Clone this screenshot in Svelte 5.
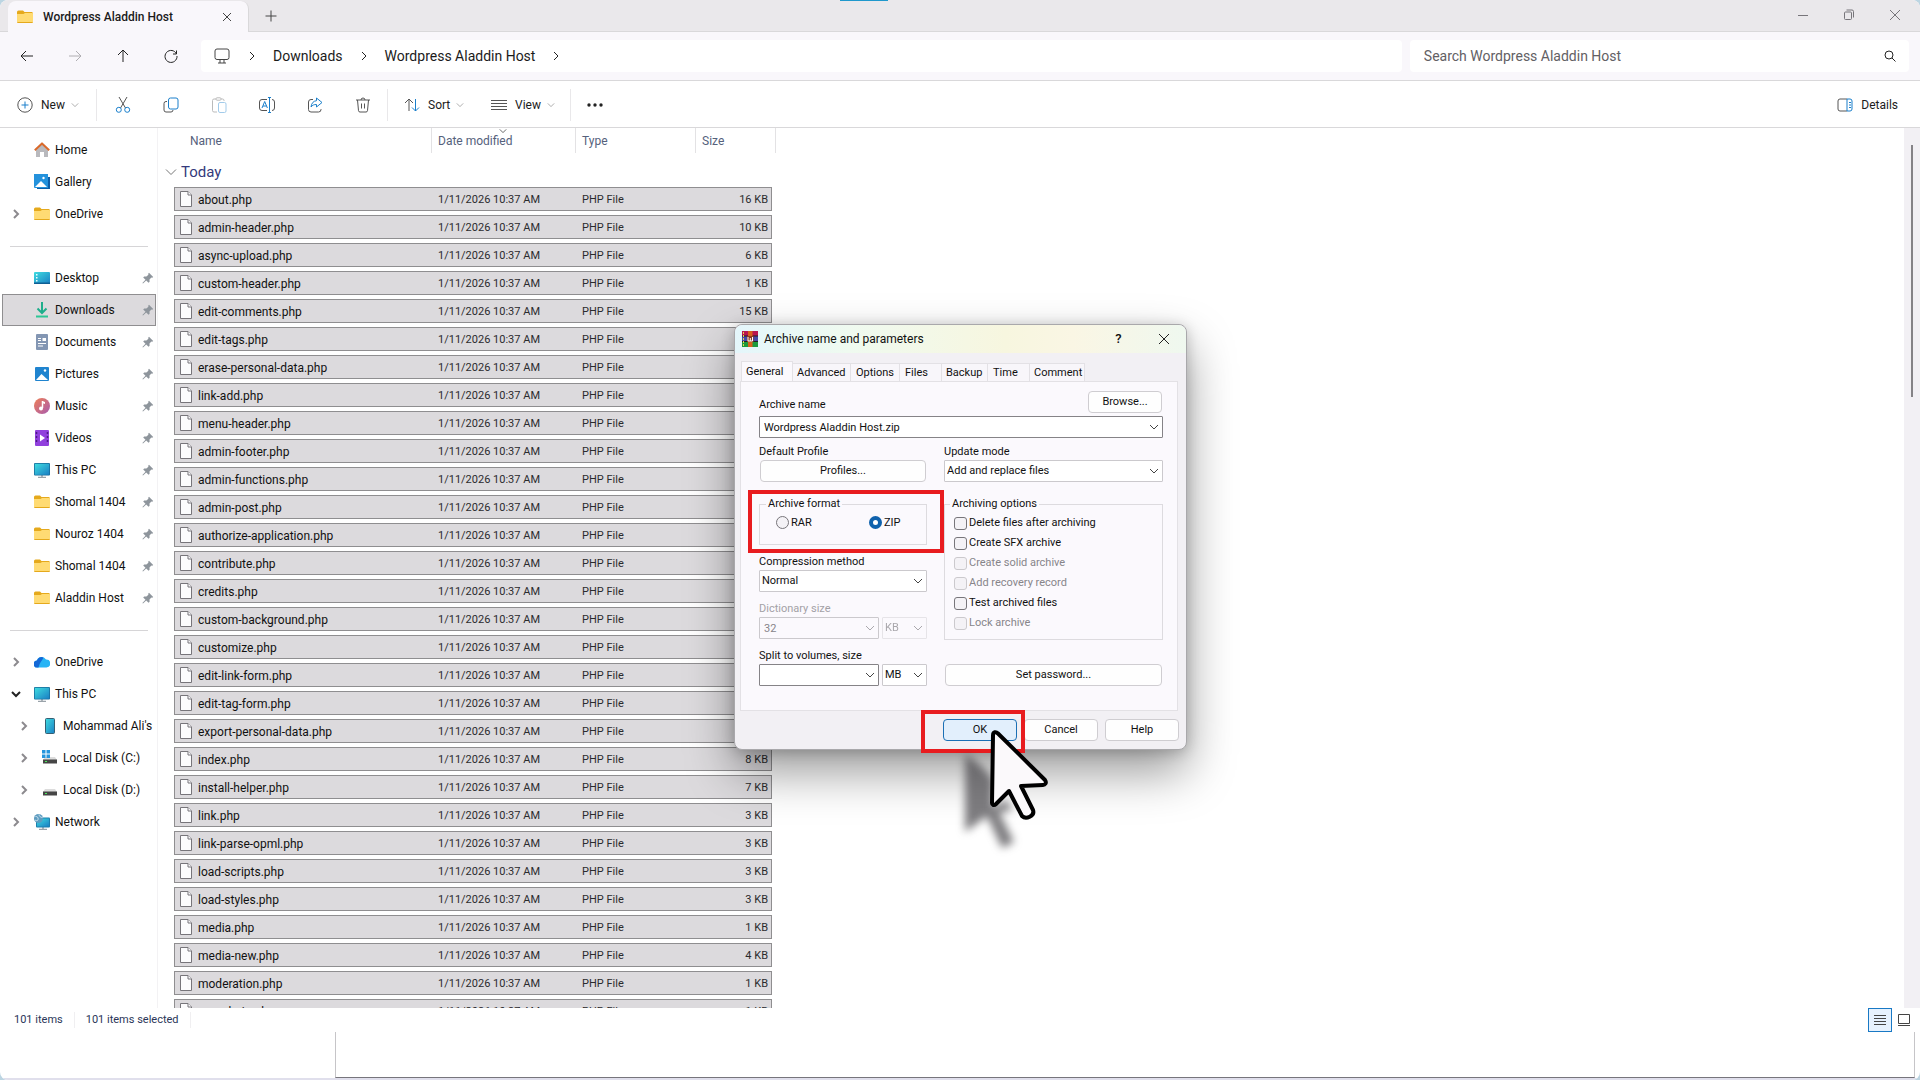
<script>
    const navTop = [
        { label: 'Home', icon: 'home' },
        { label: 'Gallery', icon: 'gallery' },
        { label: 'OneDrive', icon: 'folder', arrow: 'right' }
    ];
    const pinned = [
        { label: 'Desktop', icon: 'desktop' },
        { label: 'Downloads', icon: 'downloads', active: true },
        { label: 'Documents', icon: 'documents' },
        { label: 'Pictures', icon: 'pictures' },
        { label: 'Music', icon: 'music' },
        { label: 'Videos', icon: 'videos' },
        { label: 'This PC', icon: 'pc' },
        { label: 'Shomal 1404', icon: 'folder' },
        { label: 'Nouroz 1404', icon: 'folder' },
        { label: 'Shomal 1404', icon: 'folder' },
        { label: 'Aladdin Host', icon: 'folder' }
    ].map((item) => ({ ...item, pin: true }));
    const drives = [
        { label: 'OneDrive', icon: 'cloud', arrow: 'right' },
        { label: 'This PC', icon: 'pc', arrow: 'down' },
        { label: "Mohammad Ali's", icon: 'phone', arrow: 'right', child: true },
        { label: 'Local Disk (C:)', icon: 'diskC', arrow: 'right', child: true },
        { label: 'Local Disk (D:)', icon: 'diskD', arrow: 'right', child: true },
        { label: 'Network', icon: 'network', arrow: 'right' }
    ];
    const navGroups = [navTop, pinned, drives];

    const files = [
        ['about.php', 16],
        ['admin-header.php', 10],
        ['async-upload.php', 6],
        ['custom-header.php', 1],
        ['edit-comments.php', 15],
        ['edit-tags.php', 22],
        ['erase-personal-data.php', 8],
        ['link-add.php', 1],
        ['menu-header.php', 10],
        ['admin-footer.php', 3],
        ['admin-functions.php', 1],
        ['admin-post.php', 2],
        ['authorize-application.php', 10],
        ['contribute.php', 6],
        ['credits.php', 5],
        ['custom-background.php', 1],
        ['customize.php', 11],
        ['edit-link-form.php', 7],
        ['edit-tag-form.php', 11],
        ['export-personal-data.php', 8],
        ['index.php', 8],
        ['install-helper.php', 7],
        ['link.php', 3],
        ['link-parse-opml.php', 3],
        ['load-scripts.php', 3],
        ['load-styles.php', 3],
        ['media.php', 1],
        ['media-new.php', 4],
        ['moderation.php', 1],
        ['ms-admin.php', 1]
    ];

    const tabs = ['General', 'Advanced', 'Options', 'Files', 'Backup', 'Time', 'Comment'];
    let currentTab = $state('General');

    let archiveName = $state('Wordpress Aladdin Host.zip');
    let format = $state('ZIP');
    const options = $state([
        { label: 'Delete files after archiving', checked: false },
        { label: 'Create SFX archive', checked: false },
        { label: 'Create solid archive', checked: false, disabled: true },
        { label: 'Add recovery record', checked: false, disabled: true },
        { label: 'Test archived files', checked: false },
        { label: 'Lock archive', checked: false, disabled: true }
    ]);
</script>

{#snippet chevron(dir)}
    <svg class="chev" width="10" height="10" viewBox="0 0 10 10">
        {#if dir === 'right'}
            <path d="M3 1l4 4-4 4" />
        {:else}
            <path d="M1 3l4 4 4-4" />
        {/if}
    </svg>
{/snippet}

{#snippet navIcon(name)}
    <svg class="icon" width="16" height="16" viewBox="0 0 16 16">
        {#if name === 'home'}
            <path d="M2 8l6-6 6 6v7h-4v-5H6v5H2z" fill="#b9b9bd" />
            <path d="M.8 8.2L8 1.4l7.2 6.8" fill="none" stroke="#d9692a" stroke-width="2" stroke-linejoin="round" />
        {:else if name === 'gallery'}
            <path d="M3 3h13v12H3z" fill="#0d5ea8" />
            <path d="M0 0h14v14H1a1 1 0 0 1-1-1z" fill="#2492dc" />
            <path d="M1 13l6-6 6 6z" fill="#fff" />
            <circle cx="9.500" cy="4" r="1.200" fill="#fff" />
        {:else if name === 'folder'}
            <path d="M0 3a1.500 1.500 0 0 1 1.500-1.500H6L7.500 3H15l1 1V13a1 1 0 0 1-1 1H1a1 1 0 0 1-1-1z" fill="#e5a91c" />
            <path d="M0 5h6.500L8 4h7.500l.5.500v8.500H0z" fill="#ffdb73" />
        {:else if name === 'desktop'}
            <rect y="2" width="16" height="12" rx="1" fill="url(#teal)" />
            <path d="M2 4h1.500v1.500H2zM2 7h1.500v1.500H2zM2 10h1.500v1.500H2z" fill="#e8ffff" />
            <path d="M0 12.500h16V14H0z" fill="#0f5f94" />
        {:else if name === 'downloads'}
            <path d="M8 0v10M3.500 6.500L8 11l4.500-4.500" fill="none" stroke="#1fae8c" stroke-width="2" />
            <path d="M2 14.500h12" stroke="#2cc795" stroke-width="2" />
        {:else if name === 'documents'}
            <rect x="2" width="12" height="16" rx="1" fill="#8396b3" />
            <path d="M4 4.500h3M4 6.500h3M4 9.500h8M4 12h5" stroke="#fff" />
            <path d="M8.500 4h3.500v3H8.500z" fill="#fff" />
        {:else if name === 'pictures'}
            <rect x="1" y="1" width="14" height="14" rx="1" fill="#2084cf" />
            <path d="M2 14l5.500-6L14 14z" fill="#fff" />
            <circle cx="11" cy="4.500" r="1.200" fill="#fff" />
        {:else if name === 'music'}
            <circle cx="8" cy="8" r="8" fill="url(#rose)" />
            <path d="M8.500 3v7" stroke="#fff" stroke-width="1.500" />
            <path d="M8 3l3 1v2L8 5z" fill="#fff" />
            <circle cx="7" cy="10.500" r="2" fill="#fff" />
        {:else if name === 'videos'}
            <rect x="1" width="14" height="16" rx="1" fill="#9140dd" />
            <path d="M2.500 2v12M13.500 2v12" stroke="#4d1b86" stroke-width="1.500" stroke-dasharray="2 2" />
            <path d="M6 4.500L11 8l-5 3.500z" fill="#fff" />
        {:else if name === 'pc'}
            <path d="M4 15.500h8M8 13v3" stroke="#9aa3aa" stroke-width="1.500" />
            <rect y="1" width="16" height="12.500" rx="1" fill="#176e9c" />
            <rect x=".8" y="1.800" width="14.400" height="11" fill="url(#teal)" />
        {:else if name === 'cloud'}
            <path d="M3.500 13.500a3.500 3.500 0 0 1-.6-7A5 5 0 0 1 12 5.500a4 4 0 0 1 .5 8z" fill="#27b4f5" />
            <path d="M3.500 13.500a3.500 3.500 0 0 1-.6-7A5 5 0 0 1 9.500 3.500C8 7 6 8 4.500 13.500z" fill="#1468d6" />
        {:else if name === 'phone'}
            <rect x="3.500" y=".5" width="9" height="15" rx="1" fill="url(#teal)" stroke="#355f73" />
        {:else if name === 'diskC' || name === 'diskD'}
            <path d="M3 7h10l2 3H1z" fill="#dcdcdc" />
            <path d="M1 9.500h14v4H1z" fill="#454545" />
            <path d="M3 11.500h2" stroke="#4bea5c" />
            {#if name === 'diskC'}
                <path d="M0 0h3.500v3.500H0zM4.500 0H8v3.500H4.500zM0 4.500h3.500V8H0zM4.500 4.500H8V8H4.500z" fill="#2695dd" />
            {/if}
        {:else if name === 'network'}
            <path d="M5 15.500h8M9 13v3" stroke="#9aa3aa" stroke-width="1.500" />
            <rect x="2" y="3.500" width="14" height="10" rx="1" fill="#1b7fae" />
            <rect x="3" y="4.500" width="12" height="8" fill="url(#teal)" />
            <circle cx="4.500" cy="4.500" r="4.500" fill="#5e9cc0" />
            <path d="M1.500 2.500c2 0 3 1 2.500 3S2 6.500 1 6M5 .500c0 2 2 3 3.500 3" fill="none" stroke="#cde3ef" />
        {/if}
    </svg>
{/snippet}

{#snippet navList(items)}
    <ul>
        {#each items as item}
            <li>
                <button class="nav-item" class:active={item.active} class:child={item.child}>
                    <span class="arrow" class:open={item.arrow === 'down'}>
                        {#if item.arrow}{@render chevron(item.arrow)}{/if}
                    </span>
                    {@render navIcon(item.icon)}
                    <span class="nav-label">{item.label}</span>
                    {#if item.pin}
                        <svg class="pin" width="12" height="12" viewBox="0 0 12 12">
                            <path d="M7 .800L11.200 5l-1 .8-.8-.200-1.900 2 .1 2.200-1 1L4.200 8.500 1 11.500l-.6-.6L3.500 7.800 1.200 5.500l1-1 2.200.1 2-1.900-.2-.900z" />
                        </svg>
                    {/if}
                </button>
            </li>
        {/each}
    </ul>
{/snippet}

<svg class="defs" width="0" height="0" aria-hidden="true">
    <linearGradient id="teal" x2="1" y2="1">
        <stop offset="0" stop-color="#3fdce0" />
        <stop offset="1" stop-color="#1a7fc4" />
    </linearGradient>
    <linearGradient id="rose" x2="1" y2="1">
        <stop offset="0" stop-color="#ef7f55" />
        <stop offset="1" stop-color="#a85bb0" />
    </linearGradient>
</svg>

<div class="window">
    <header class="titlebar">
        <div class="tab">
            {@render navIcon('folder')}
            <span class="tab-title">Wordpress Aladdin Host</span>
            <button aria-label="Close tab">
                <svg width="10" height="10" viewBox="0 0 10 10"><path d="M1 1l8 8M9 1L1 9" /></svg>
            </button>
        </div>
        <button class="new-tab" aria-label="New tab">
            <svg width="12" height="12" viewBox="0 0 12 12"><path d="M6 .5v11M.5 6h11" /></svg>
        </button>
        <div class="win-buttons">
            <button aria-label="Minimize">
                <svg width="12" height="12" viewBox="0 0 12 12"><path d="M1 6.500h10" /></svg>
            </button>
            <button aria-label="Restore">
                <svg width="12" height="12" viewBox="0 0 12 12">
                    <rect x="1.500" y="3" width="7" height="7.500" rx="1" />
                    <path d="M3.500 1h5.500a1.500 1.500 0 0 1 1.500 1.500v6" />
                </svg>
            </button>
            <button aria-label="Close">
                <svg width="12" height="12" viewBox="0 0 12 12"><path d="M1 1l10 10M11 1L1 11" /></svg>
            </button>
        </div>
        <i class="notch"></i>
    </header>

    <div class="address">
        <button class="nav-btn" aria-label="Back">
            <svg width="14" height="14" viewBox="0 0 14 14"><path d="M13 7H1M6 2L1 7l5 5" /></svg>
        </button>
        <button class="nav-btn off" aria-label="Forward">
            <svg width="14" height="14" viewBox="0 0 14 14"><path d="M1 7h12M8 2l5 5-5 5" /></svg>
        </button>
        <button class="nav-btn" aria-label="Up">
            <svg width="14" height="14" viewBox="0 0 14 14"><path d="M7 13V1M2 6l5-5 5 5" /></svg>
        </button>
        <button class="nav-btn" aria-label="Refresh">
            <svg width="14" height="14" viewBox="0 0 14 14"><path d="M12.500 5A6 6 0 1 0 13 7M12.500 1.500V5H9" /></svg>
        </button>
        <nav class="crumbs">
            <svg width="18" height="16" viewBox="0 0 18 16">
                <rect x="2" y="1" width="14" height="10.500" rx="2" />
                <path d="M7 11.500V15M11 11.500V15M5 15h8" />
            </svg>
            <span class="sep">{@render chevron('right')}</span>
            <a href="#downloads">Downloads</a>
            <span class="sep">{@render chevron('right')}</span>
            <a href="#host">Wordpress Aladdin Host</a>
            <span class="sep">{@render chevron('right')}</span>
        </nav>
        <label class="search">
            <input type="text" aria-label="Search" placeholder="Search Wordpress Aladdin Host" />
            <svg width="12" height="12" viewBox="0 0 12 12"><circle cx="5" cy="5" r="4" /><path d="M8 8l3.500 3.500" /></svg>
        </label>
    </div>

    <div class="toolbar">
        <button class="tool new">
            <svg width="16" height="16" viewBox="0 0 16 16">
                <circle cx="8" cy="8" r="7.200" />
                <path class="blue" d="M8 4.500v7M4.500 8h7" />
            </svg>
            New {@render chevron('down')}
        </button>
        <button class="tool square" aria-label="Cut">
            <svg width="16" height="16" viewBox="0 0 16 16">
                <path d="M4 0l6.500 11M12 0L5.500 11" />
                <circle class="blue" cx="3.800" cy="12.800" r="2.500" />
                <circle class="blue" cx="12.200" cy="12.800" r="2.500" />
            </svg>
        </button>
        <button class="tool square" aria-label="Copy">
            <svg width="16" height="16" viewBox="0 0 16 16">
                <path d="M4 4.500H3a2 2 0 0 0-2 2V13a2 2 0 0 0 2 2h5a2 2 0 0 0 2-2" />
                <rect class="blue" x="5.500" y="1" width="9.500" height="11" rx="2" />
            </svg>
        </button>
        <button class="tool square faded" aria-label="Paste">
            <svg width="16" height="16" viewBox="0 0 16 16">
                <path d="M5 2H3a1.500 1.500 0 0 0-1.500 1.500v10A1.500 1.500 0 0 0 3 15h3M10 2h1.500A1.500 1.500 0 0 1 13 3.500V4" />
                <rect x="5" y=".8" width="5" height="2.400" rx="1" />
                <rect class="blue" x="7.500" y="5.500" width="7.500" height="10" rx="1.500" />
            </svg>
        </button>
        <button class="tool square" aria-label="Rename">
            <svg width="18" height="16" viewBox="0 0 18 16">
                <path d="M9 2.500H4a2.500 2.500 0 0 0-2.500 2.500v6A2.500 2.500 0 0 0 4 13.500h5M14 2.500a2.500 2.500 0 0 1 2.500 2.500v6a2.500 2.500 0 0 1-2.500 2.500" />
                <path class="blue" d="M4 11l2.700-6.500L9.400 11M5 9h3.500M10 .5h3M11.500 .5v15M10 15.500h3" />
            </svg>
        </button>
        <button class="tool square" aria-label="Share">
            <svg width="16" height="16" viewBox="0 0 16 16">
                <path d="M6 2.500H4A2.500 2.500 0 0 0 1.500 5v7.500A2.500 2.500 0 0 0 4 15h7.500a2.500 2.500 0 0 0 2.500-2.500V12" />
                <path class="blue" d="M9.500 1l5.500 4.500L9.500 10V7.500c-2.500 0-4 .5-5.500 2.500.5-4 2.500-6 5.500-6.300z" />
            </svg>
        </button>
        <button class="tool square" aria-label="Delete">
            <svg width="16" height="16" viewBox="0 0 16 16">
                <path d="M1 3h14M6 3a2 2 0 0 1 4 0M2.500 3l1 10.700A1.500 1.500 0 0 0 5 15h6a1.500 1.500 0 0 0 1.500-1.300l1-10.700M6.500 6.500v5M9.500 6.500v5" />
            </svg>
        </button>
        <button class="tool sort">
            <svg width="16" height="16" viewBox="0 0 16 16">
                <path d="M5 14V2M1 6l4-4 4 4" />
                <path class="blue" d="M11.500 2v12M8 10.500l3.500 3.500 3.500-3.500" />
            </svg>
            Sort {@render chevron('down')}
        </button>
        <button class="tool view">
            <svg width="16" height="16" viewBox="0 0 16 16"><path d="M0 3.500h16M0 6.500h16M0 9.500h16M0 12.500h16" /></svg>
            View {@render chevron('down')}
        </button>
        <button class="tool more" aria-label="See more">
            <svg width="18" height="4" viewBox="0 0 18 4">
                <circle cx="3" cy="2" r="1.700" /><circle cx="9" cy="2" r="1.700" /><circle cx="15" cy="2" r="1.700" />
            </svg>
        </button>
        <button class="tool details">
            <svg width="16" height="16" viewBox="0 0 16 16">
                <path d="M10 2H3a2 2 0 0 0-2 2v8a2 2 0 0 0 2 2h7" />
                <path class="blue" d="M10 2h3a2 2 0 0 1 2 2v8a2 2 0 0 1-2 2h-3zM12 5.500h2M12 8h2M12 10.500h2" />
            </svg>
            Details
        </button>
    </div>

    <main>
        <aside>
            {#each navGroups as group, i}
                {#if i > 0}<hr />{/if}
                {@render navList(group)}
            {/each}
        </aside>

        <section class="list">
            <table>
                <thead>
                    <tr>
                        <th>Name</th>
                        <th class="sorted">Date modified {@render chevron('down')}</th>
                        <th>Type</th>
                        <th>Size</th>
                    </tr>
                </thead>
                <tbody>
                    <tr class="group">
                        <th colspan="4">
                            <svg width="12" height="12" viewBox="0 0 12 12"><path d="M1 3.500l5 5 5-5" /></svg>
                            Today
                        </th>
                    </tr>
                    {#each files as [name, size]}
                        <tr class="file">
                            <td class="name">
                                <svg width="12" height="16" viewBox="0 0 12 16">
                                    <path d="M.5.5H8L11.500 4v11.500H.5z" />
                                    <path d="M8 .5V4h3.500" />
                                </svg>
                                <span>{name}</span>
                            </td>
                            <td>1/11/2026 10:37 AM</td>
                            <td>PHP File</td>
                            <td class="size">{size} KB</td>
                        </tr>
                    {/each}
                </tbody>
            </table>
        </section>
        <div class="scroll"><i></i></div>
    </main>

    <footer>
        <span>101 items</span>
        <span>101 items selected</span>
        <div class="modes">
            <button class="on" aria-label="Details view">
                <svg width="12" height="12" viewBox="0 0 12 12"><path d="M0 1.500h12M0 4.500h12M0 7.500h12M0 10.500h12" /></svg>
            </button>
            <button aria-label="Large icons view">
                <svg width="12" height="12" viewBox="0 0 12 12"><path d="M.5.500h11v9H.5zM0 11.500h12" /></svg>
            </button>
        </div>
    </footer>
    <div class="under"><div></div></div>

    <div class="dialog" role="dialog" aria-label="Archive name and parameters">
        <div class="dialog-title">
            <svg width="16" height="16" viewBox="0 0 16 16">
                <path d="M0 0h16v5H0z" fill="#b91550" stroke="none" />
                <path d="M0 5h16v5.500H0z" fill="#4648a8" stroke="none" />
                <path d="M0 10.500h16V16H0z" fill="#1c9a3c" stroke="none" />
                <path d="M0 5h16M0 10.500h16" stroke="#222" />
                <path d="M1.500 1v14" stroke="#e9d34c" stroke-dasharray="2 1" />
                <path d="M6 0h4.500v16H6z" fill="#d9601d" stroke="none" />
                <path d="M5 5h6.500v6H5z" fill="#8f3b22" stroke="none" />
                <path d="M6 6v4h4.500V6M8.300 7v3" fill="none" stroke="#fff" />
            </svg>
            <h2>Archive name and parameters</h2>
            <button aria-label="Help">?</button>
            <button aria-label="Close dialog">
                <svg width="12" height="12" viewBox="0 0 12 12"><path d="M1 1l10 10M11 1L1 11" /></svg>
            </button>
        </div>

        <div class="tabs" role="tablist">
            {#each tabs as tab}
                <button role="tab" aria-selected={tab === currentTab} class:current={tab === currentTab} onclick={() => (currentTab = tab)}>{tab}</button>
            {/each}
        </div>

        <div class="panel">
            <div class="name-row">
                <label for="archive-name">Archive name</label>
                <button class="push">Browse...</button>
            </div>
            <div class="combo dark">
                <input id="archive-name" type="text" bind:value={archiveName} />
                {@render chevron('down')}
            </div>

            <div class="columns">
                <div class="col">
                    <label for="profiles">Default Profile</label>
                    <button id="profiles" class="push">Profiles...</button>

                    <fieldset class="format">
                        <legend>Archive format</legend>
                        <label><input type="radio" bind:group={format} value="RAR" />RAR</label>
                        <label><input type="radio" bind:group={format} value="ZIP" />ZIP</label>
                    </fieldset>

                    <label for="method">Compression method</label>
                    <div class="combo">
                        <select id="method"><option>Normal</option></select>
                        {@render chevron('down')}
                    </div>

                    <label class="field off" for="dict">Dictionary size</label>
                    <div class="pair">
                        <div class="combo off">
                            <input id="dict" type="text" value="32" disabled />
                            {@render chevron('down')}
                        </div>
                        <div class="combo off faint">
                            <select aria-label="Dictionary unit" disabled><option>KB</option></select>
                            {@render chevron('down')}
                        </div>
                    </div>

                    <label class="field" for="split">Split to volumes, size</label>
                    <div class="pair">
                        <div class="combo dark">
                            <input id="split" type="text" />
                            {@render chevron('down')}
                        </div>
                        <div class="combo">
                            <select aria-label="Volume unit"><option>MB</option></select>
                            {@render chevron('down')}
                        </div>
                    </div>
                </div>

                <div class="col">
                    <label for="update">Update mode</label>
                    <div class="combo">
                        <select id="update"><option>Add and replace files</option></select>
                        {@render chevron('down')}
                    </div>

                    <fieldset class="options">
                        <legend>Archiving options</legend>
                        {#each options as option}
                            <label class:off={option.disabled}>
                                <input type="checkbox" bind:checked={option.checked} disabled={option.disabled} />{option.label}
                            </label>
                        {/each}
                    </fieldset>

                    <button class="push password">Set password...</button>
                </div>
            </div>
        </div>

        <div class="actions">
            <button class="push default">OK</button>
            <button class="push">Cancel</button>
            <button class="push">Help</button>
        </div>

        <i class="mark mark-format"></i>
        <i class="mark mark-ok"></i>
        <svg class="cursor" width="100" height="130" viewBox="0 0 100 130">
            <path class="shade" d="M12 26c10 6 22 16 28 26v28l12-8 8 10-14 2 15 30-12 6-15-32-22 16z" />
            <path class="pointer" d="M40 7.500c0-4 3-4 5-2L92 52c2 3 0 5-2 5l-22 1 12 24c2 6-7 10-11 6L56 63 43 76c-2 2-4 1-4-1z" />
        </svg>
    </div>
</div>

<style>
    :global(body) {
        margin: 0;
        background: #bcd5e2;
        font: 12px/16px Roboto, "Open Sans", sans-serif;
        color: #1b1b1b;
    }
    button, input, select {
        font: inherit;
        color: inherit;
        margin: 0;
        padding: 0;
        border: 0;
        background: none;
        outline: none;
    }
    button {
        display: flex;
        align-items: center;
        justify-content: center;
    }
    svg {
        flex: none;
        fill: none;
        stroke: #444;
    }
    .icon {
        stroke: none;
    }
    .defs {
        position: absolute;
    }
    .window {
        position: relative;
        display: flex;
        flex-direction: column;
        height: 100vh;
        overflow: hidden;
        background: #fff;
        border-radius: 8px;
    }

    /* title bar */
    .titlebar {
        display: flex;
        align-items: flex-end;
        flex: none;
        height: 31px;
        padding-left: 8px;
        background: #eae8eb;
        border-bottom: 1px solid #d9d8da;
    }
    .tab {
        display: flex;
        align-items: center;
        width: 222px;
        height: 31px;
        margin-bottom: -1px;
        padding: 0 9px;
        background: #f9f7fb;
        border-right: 1px solid #d9d8da;
        border-radius: 8px 8px 0 0;
    }
    .tab-title {
        flex: 1;
        padding-left: 10px;
        font-weight: 500;
    }
    .tab button {
        width: 24px;
        height: 24px;
    }
    .new-tab {
        width: 44px;
        height: 30px;
    }
    .win-buttons {
        display: flex;
        margin-left: auto;
        align-self: flex-start;
        padding-right: 2px;
    }
    .win-buttons button {
        width: 46px;
        height: 29px;
    }
    .win-buttons svg {
        stroke: #77757a;
    }
    .notch {
        position: absolute;
        top: 0;
        left: 840px;
        width: 48px;
        height: 1px;
        background: #1f98cc;
    }

    /* address row */
    .address {
        display: flex;
        align-items: center;
        flex: none;
        height: 48px;
        padding: 0 11px 0 3px;
        background: #f9f7fb;
        border-bottom: 1px solid #d9d8da;
    }
    .nav-btn {
        width: 48px;
        height: 32px;
    }
    .nav-btn svg {
        stroke: #222;
    }
    .nav-btn.off svg {
        stroke: #b0aeb2;
    }
    .crumbs, .search {
        display: flex;
        align-items: center;
        height: 32px;
        background: #fff;
        border-radius: 4px;
        font-size: 14px;
    }
    .crumbs {
        flex: 1;
        margin-left: 6px;
        padding-left: 12px;
    }
    .crumbs a {
        color: #1b1b1b;
        text-decoration: none;
    }
    .sep {
        display: flex;
        justify-content: center;
        width: 42px;
    }
    .sep svg {
        stroke: #222;
    }
    .search {
        width: 26vw;
        margin-left: 8px;
        padding: 0 13px 0 14px;
        box-sizing: border-box;
    }
    .search input {
        flex: 1;
    }
    .search input::placeholder {
        color: #626064;
        opacity: 1;
    }
    .search svg {
        stroke: #222;
    }

    /* command bar */
    .toolbar {
        display: flex;
        align-items: center;
        flex: none;
        height: 45px;
        padding: 1px 22px 0 17px;
        border-bottom: 1px solid #d9d8da;
    }
    .tool {
        height: 32px;
        gap: 8px;
    }
    .tool svg {
        stroke: #555;
    }
    .tool .blue {
        stroke: #1a7fcb;
    }
    .tool .chev {
        width: 8px;
        margin-left: -2px;
        stroke: #999;
    }
    .tool.new {
        justify-content: flex-start;
        width: 80px;
        border-right: 1px solid #e9e8ea;
        margin-right: 2px;
    }
    .square {
        width: 48px;
    }
    .faded svg {
        opacity: 0.4;
    }
    .tool.sort {
        justify-content: flex-start;
        width: 104px;
        padding-left: 16px;
        border-left: 1px solid #e9e8ea;
    }
    .tool.view {
        justify-content: flex-start;
        width: 80px;
        border-right: 1px solid #e9e8ea;
    }
    .tool.more {
        width: 48px;
    }
    .tool.more svg {
        fill: #222;
        stroke: none;
    }
    .tool.details {
        margin-left: auto;
    }

    /* navigation pane */
    main {
        display: flex;
        flex: 1;
        min-height: 0;
    }
    aside {
        flex: none;
        width: 158px;
        padding-top: 6px;
        box-sizing: border-box;
        border-right: 1px solid #f3f2f4;
        margin-right: 1px;
        overflow: hidden;
    }
    ul {
        margin: 0;
        padding: 0;
        list-style: none;
    }
    hr {
        margin: 16px 9px 15px 10px;
        border: 0;
        border-top: 1px solid #d6d5d7;
    }
    .nav-item {
        justify-content: flex-start;
        width: 154px;
        height: 32px;
        margin-left: 2px;
        padding: 0 2px 0 9px;
        box-sizing: border-box;
        color: #111;
        white-space: nowrap;
    }
    .nav-item.active {
        padding: 0 1px 0 8px;
        background: #dcdadd;
        border: 1px solid #8f8e90;
    }
    .nav-item.child {
        padding-left: 17px;
        padding-right: 0;
    }
    .arrow {
        display: flex;
        width: 23px;
    }
    .arrow svg {
        stroke: #8c8a8e;
        stroke-width: 2;
    }
    .arrow.open svg {
        stroke: #222;
    }
    .nav-label {
        flex: 1;
        padding-left: 5px;
        text-align: left;
    }
    .pin {
        fill: #8e959c;
        stroke: none;
    }

    /* file list */
    .list {
        flex: 1;
        padding-left: 15px;
        overflow: hidden;
    }
    table, thead, tbody {
        display: block;
    }
    tr {
        display: grid;
        grid-template-columns: 257px 144px 120px 75px;
    }
    th {
        font-weight: 400;
        text-align: left;
    }
    thead tr {
        grid-template-columns: 258px 144px 120px 80px;
        height: 25px;
        color: #55617c;
    }
    thead th {
        position: relative;
        padding: 5px 6px 4px;
        border-right: 1px solid #e3e2e4;
    }
    thead th:first-child {
        padding-left: 16px;
    }
    .sorted .chev {
        position: absolute;
        top: -2px;
        left: 67px;
        width: 8px;
    }
    .group {
        height: 34px;
    }
    .group th {
        grid-column: 1 / -1;
        display: flex;
        align-items: center;
        gap: 4px;
        margin-left: -9px;
        padding: 4px 0 0;
        font-size: 15px;
        color: #343a7c;
    }
    .group svg {
        stroke: #777;
    }
    .file {
        width: 596px;
        height: 22px;
        margin-bottom: 4px;
        border: 1px solid #8f8e90;
        background: #dcdadd;
    }
    .file td {
        padding: 4px 6px 2px;
        font-size: 11px;
        color: #2b2b2e;
    }
    .file .name {
        display: flex;
        align-items: flex-start;
        gap: 6px;
        padding: 3px 5px 0;
        font-size: 12px;
        color: #111;
    }
    .name span {
        padding-top: 1px;
    }
    .name svg {
        fill: #fcfcfd;
        stroke: #77757a;
    }
    .file .size {
        padding-right: 3px;
        text-align: right;
    }
    .scroll {
        width: 16px;
        padding-top: 17px;
        background: #f2f0f4;
    }
    .scroll i {
        display: block;
        width: 2px;
        height: 252px;
        margin-left: 7px;
        background: #858387;
    }

    /* status bar */
    footer {
        display: flex;
        align-items: center;
        flex: none;
        height: 24px;
        padding: 0 6px 0 3px;
        font-size: 11px;
        color: #2a3658;
    }
    footer span {
        padding: 0 11px;
        border-right: 1px solid #f0eff1;
    }
    .modes {
        display: flex;
        gap: 2px;
        margin-left: auto;
    }
    .modes button {
        width: 20px;
        height: 24px;
        box-sizing: border-box;
    }
    .modes .on {
        width: 24px;
        background: #e6f1fd;
        border: 1px solid #1979c5;
    }
    .under {
        flex: none;
        height: 48px;
        padding: 0 5px 0 335px;
        box-sizing: border-box;
        border-bottom: 2px solid #e0dfec;
    }
    .under div {
        height: 45px;
        border: solid #c6c5c8;
        border-width: 0 1px 1px;
        border-bottom-color: #77757c;
    }

    /* archive dialog */
    .dialog {
        position: absolute;
        left: 734px;
        top: 324px;
        width: 453px;
        background: #f2f0f4;
        border: 1px solid #a9a8ab;
        border-radius: 8px;
        box-sizing: border-box;
        box-shadow: 0 22px 48px rgba(0, 0, 0, 0.4), 0 2px 14px rgba(0, 0, 0, 0.2);
        font-size: 11px;
        color: #111;
    }
    .dialog-title {
        display: flex;
        align-items: center;
        height: 28px;
        padding-left: 7px;
        border-radius: 8px 8px 0 0;
        background: linear-gradient(90deg, #e4f6fb, #effaf0 25%, #f7f6df 60%, #faf6e4 75%, #eff8ef);
        font-size: 12px;
    }
    h2 {
        flex: 1;
        margin: 0 0 0 6px;
        font-size: 12px;
        font-weight: 400;
    }
    .dialog-title button {
        width: 45px;
        height: 28px;
        font-size: 13px;
        font-weight: 500;
    }
    .dialog-title button svg {
        stroke: #222;
    }
    .tabs {
        display: flex;
        align-items: flex-end;
        height: 20px;
        margin-top: 8px;
        padding-left: 6px;
    }
    .tabs button {
        height: 18px;
        padding: 0 4px;
        min-width: 42px;
        box-sizing: border-box;
        justify-content: flex-start;
        background: #f8f6fa;
        border: 1px solid #e3e1e5;
        border-width: 1px 1px 0 0;
    }
    .tabs button:nth-child(2) { width: 58px; }
    .tabs button:nth-child(3) { width: 49px; padding-left: 5px; }
    .tabs button:nth-child(4) { padding-left: 5px; }
    .tabs button:nth-child(5) { width: 46px; }
    .tabs button:nth-child(6) { padding-left: 5px; }
    .tabs button:nth-child(7) { width: 55px; }
    .tabs .current {
        width: 52px;
        height: 20px;
        background: #fbf9fd;
        border-left-width: 1px;
    }
    .panel {
        margin: 0 8px 0 5px;
        padding: 9px 14px 24px 18px;
        background: #fbf9fd;
        border: 1px solid #e3e1e5;
    }
    .name-row {
        display: flex;
        align-items: flex-end;
        justify-content: space-between;
        margin-bottom: 3px;
    }
    .push {
        width: 74px;
        height: 22px;
        background: #fefefe;
        border: 1px solid #cfcdd1;
        border-radius: 4px;
    }
    .name-row .push {
        margin-right: 1px;
    }
    .combo {
        display: grid;
        align-items: center;
        height: 22px;
        box-sizing: border-box;
        background: #fff;
        border: 1px solid #cbc9cd;
        border-radius: 1px;
    }
    .combo > :global(*) {
        grid-area: 1 / 1;
    }
    .combo input, .combo select {
        width: 100%;
        height: 20px;
        padding: 0 20px 0 2px;
        box-sizing: border-box;
        appearance: none;
    }
    .combo input {
        padding-left: 4px;
    }
    .combo .chev {
        justify-self: end;
        margin-right: 3px;
        pointer-events: none;
    }
    .combo.dark {
        border-color: #858387;
    }
    .combo.off {
        background: #fbf9fd;
        color: #87858a;
    }
    .combo.off svg {
        stroke: #aaa8ad;
    }
    .combo.faint {
        border-color: #e6e4e8;
    }
    .columns {
        display: grid;
        grid-template-columns: 168px 1fr;
        gap: 17px;
        margin-top: 6px;
    }
    .col {
        display: flex;
        flex-direction: column;
    }
    .col .push {
        width: auto;
        margin-left: 1px;
        margin-right: 1px;
    }
    .field {
        margin-top: 9px;
    }
    .off {
        color: #87858a;
    }
    .field.off {
        color: #a3a1a6;
    }
    .pair {
        display: grid;
        grid-template-columns: 120px 45px;
        gap: 3px;
    }
    fieldset {
        min-width: 0;
        margin: 14px 0 0;
        border: 1px solid #dddbdf;
        box-sizing: border-box;
    }
    fieldset label {
        display: flex;
        align-items: center;
    }
    legend {
        padding: 0 2px;
    }
    .format {
        display: flex;
        height: 49px;
        margin-bottom: 9px;
        padding: 0 0 0 16px;
    }
    .format legend {
        margin-left: -10px;
    }
    .format label {
        flex: none;
        width: 93px;
        height: 21px;
    }
    .format label:last-child {
        width: 50px;
    }
    .options {
        height: 144px;
        padding: 3px 0 0 9px;
    }
    .options legend {
        margin-left: -4px;
    }
    .options label {
        height: 16px;
        margin-bottom: 4px;
    }
    fieldset input {
        appearance: none;
        width: 13px;
        height: 13px;
        margin-right: 2px;
        box-sizing: border-box;
        border: 1px solid #77757a;
        border-radius: 3px;
        background: #f4f2f6;
    }
    fieldset input[type="radio"] {
        border-radius: 50%;
    }
    fieldset input[type="radio"]:checked {
        border: 4px solid #0f62ad;
        background: #fff;
    }
    fieldset input:disabled {
        border-color: #cbc9cd;
    }
    .col .password {
        margin-top: 24px;
    }
    .actions {
        display: flex;
        justify-content: flex-end;
        gap: 7px;
        padding: 8px 7px 8px 0;
    }
    .default {
        background: #e2effc;
        border-color: #1b6fb5;
    }

    /* highlights and pointer drawn over the dialog */
    .mark {
        position: absolute;
        border: 4px solid #e81c1f;
        box-sizing: border-box;
    }
    .mark-format {
        left: 13px;
        top: 165px;
        width: 196px;
        height: 63px;
    }
    .mark-ok {
        left: 186px;
        top: 385px;
        width: 104px;
        height: 43px;
    }
    .cursor {
        position: absolute;
        left: 218px;
        top: 403px;
    }
    .shade {
        fill: rgba(70, 68, 72, 0.7);
        stroke: none;
        filter: blur(4px);
    }
    .pointer {
        fill: #fbf9fb;
        stroke: #000;
        stroke-width: 4;
        stroke-linejoin: round;
    }
</style>
